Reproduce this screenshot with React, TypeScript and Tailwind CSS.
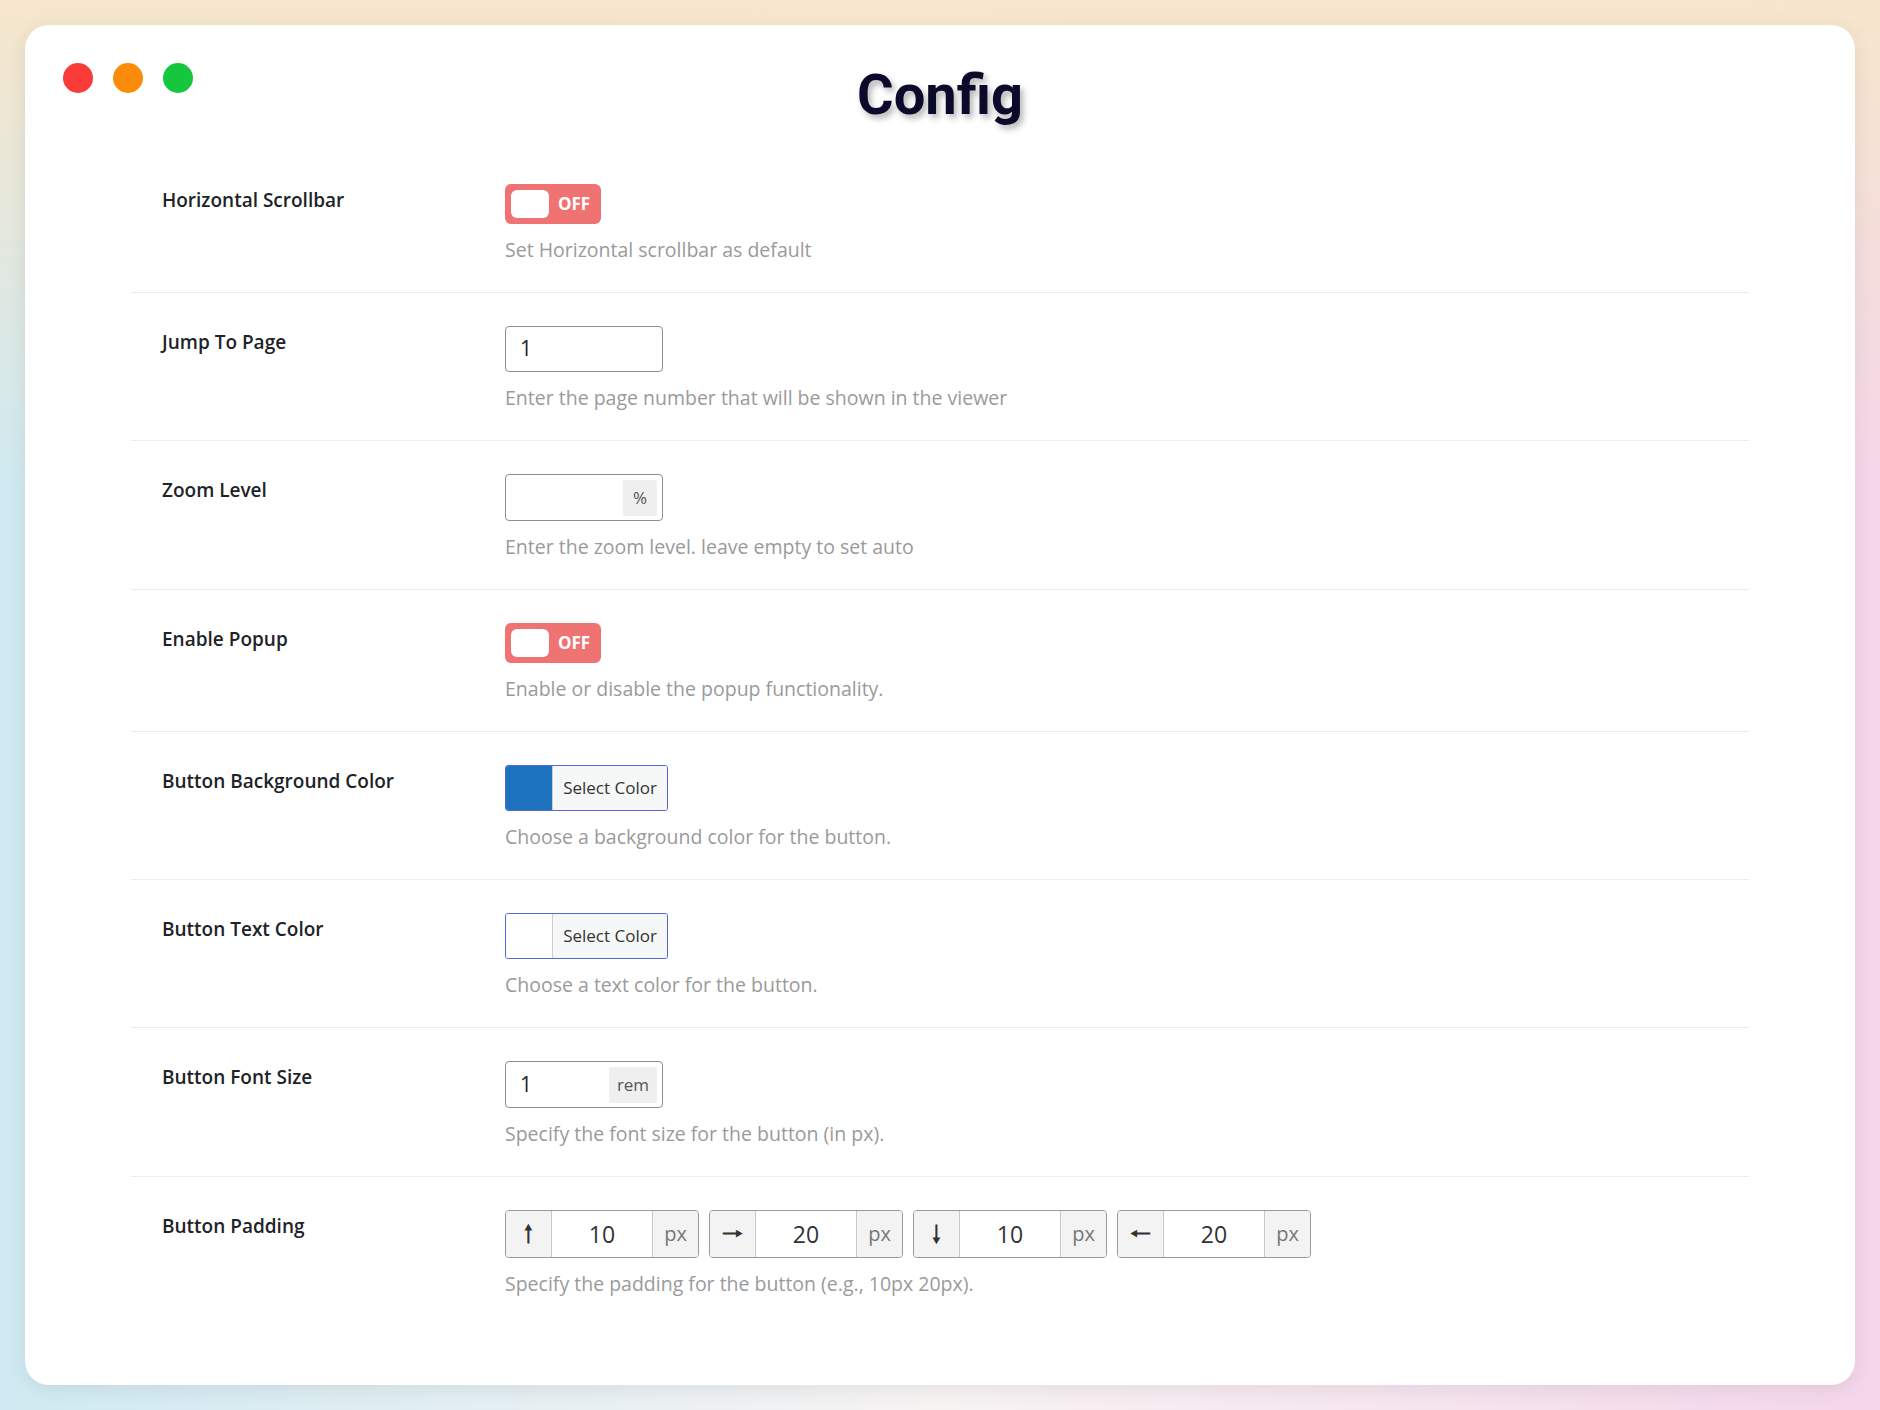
import React from "react";

function Toggle() {
  return (
    <div className="flex h-[40px] w-[96px] items-center gap-[9px] rounded-[6px] bg-[#f07373] pl-[6px]">
      <div className="h-[28px] w-[38px] rounded-[6px] bg-white" />
      <span className="text-[17px] font-bold text-white">OFF</span>
    </div>
  );
}

function Desc({ children }: { children: React.ReactNode }) {
  return <p className="mt-[13px] text-[19.5px] leading-[26px] text-[#9a9a9a]">{children}</p>;
}

function ColorPick({ color }: { color: string }) {
  return (
    <div className="flex h-[46px] w-[163px] overflow-hidden rounded-[3px] border border-[#4f68d8]">
      <div className="w-[47px] border-r border-[#c9cbd6]" style={{ background: color }} />
      <div className="flex flex-1 items-center justify-center bg-[#f6f7f7] text-[17px] text-[#333]">Select Color</div>
    </div>
  );
}

function PadGroup({ icon, value }: { icon: string; value: string }) {
  return (
    <div className="flex h-[48px] w-[194px] overflow-hidden rounded-[4px] border border-[#9a9a9a]">
      <div className="flex w-[46px] items-center justify-center border-r border-[#c8c8c8] bg-[#f3f3f3] text-[24px] font-black text-[#333]" style={{ fontFamily: '"DejaVu Sans", sans-serif' }}>{icon}</div>
      <div className="flex flex-1 items-center justify-center text-[23px] text-[#333]">{value}</div>
      <div className="flex w-[46px] items-center justify-center border-l border-[#c8c8c8] bg-[#f3f3f3] text-[20px] text-[#777]">px</div>
    </div>
  );
}

function Row({ label, children, last }: { label: string; children: React.ReactNode; last?: boolean }) {
  return (
    <div className={`flex pt-[33px] pb-[29px] ${last ? "" : "border-b border-[#ececec]"}`}>
      <div className="w-[374px] pl-[31px] pt-[2px] text-[19px] font-semibold text-[#1d2327]">{label}</div>
      <div>{children}</div>
    </div>
  );
}

export default function App() {
  return (
    <div
      className="min-h-[1410px] w-full p-[25px] pb-[25px]"
      style={{ fontFamily: '"Open Sans", sans-serif', background: "linear-gradient(180deg,#f6e6cc 0%,rgba(255,255,255,0) 35%), linear-gradient(90deg,#cfeaf2 0%,#f7f3f3 50%,#f4d6ea 100%)" }}
    >
      <div className="h-[1360px] rounded-[24px] bg-white shadow-[0_4px_20px_rgba(0,0,0,0.08)]">
        <div className="relative flex h-[126px] justify-center pt-[38px]">
          <div className="absolute left-[38px] top-[38px] flex gap-[20px]">
            <span className="h-[30px] w-[30px] rounded-full bg-[#fb3a3a]" />
            <span className="h-[30px] w-[30px] rounded-full bg-[#fb8c0a]" />
            <span className="h-[30px] w-[30px] rounded-full bg-[#14c73c]" />
          </div>
          <h1 className="text-[56px] font-bold leading-[64px] text-[#0c0a2b] [text-shadow:3px_4px_6px_rgba(0,0,0,0.3)]" style={{ fontFamily: "Roboto, sans-serif" }}>Config</h1>
        </div>
        <div className="mx-[106px]">
          <Row label="Horizontal Scrollbar">
            <Toggle />
            <Desc>Set Horizontal scrollbar as default</Desc>
          </Row>
          <Row label="Jump To Page">
            <div className="flex h-[46px] w-[158px] items-center rounded-[4px] border border-[#8c8f94] px-[14px] text-[21px] text-[#222]">1</div>
            <Desc>Enter the page number that will be shown in the viewer</Desc>
          </Row>
          <Row label="Zoom Level">
            <div className="flex h-[47px] w-[158px] items-center justify-end rounded-[4px] border border-[#8c8f94] pr-[5px]">
              <div className="flex h-[36px] w-[34px] items-center justify-center rounded-[2px] bg-[#efefef] text-[17px] text-[#555]">%</div>
            </div>
            <Desc>Enter the zoom level. leave empty to set auto</Desc>
          </Row>
          <Row label="Enable Popup">
            <Toggle />
            <Desc>Enable or disable the popup functionality.</Desc>
          </Row>
          <Row label="Button Background Color">
            <ColorPick color="#1e73be" />
            <Desc>Choose a background color for the button.</Desc>
          </Row>
          <Row label="Button Text Color">
            <ColorPick color="#ffffff" />
            <Desc>Choose a text color for the button.</Desc>
          </Row>
          <Row label="Button Font Size">
            <div className="flex h-[47px] w-[158px] items-center justify-between rounded-[4px] border border-[#8c8f94] pl-[14px] pr-[5px]">
              <span className="text-[21px] text-[#222]">1</span>
              <div className="flex h-[36px] w-[48px] items-center justify-center rounded-[2px] bg-[#efefef] text-[17px] text-[#555]">rem</div>
            </div>
            <Desc>Specify the font size for the button (in px).</Desc>
          </Row>
          <Row label="Button Padding" last>
            <div className="flex gap-[10px]">
              <PadGroup icon="🠑" value="10" />
              <PadGroup icon="🠒" value="20" />
              <PadGroup icon="🠓" value="10" />
              <PadGroup icon="🠐" value="20" />
            </div>
            <Desc>Specify the padding for the button (e.g., 10px 20px).</Desc>
          </Row>
        </div>
      </div>
    </div>
  );
}
